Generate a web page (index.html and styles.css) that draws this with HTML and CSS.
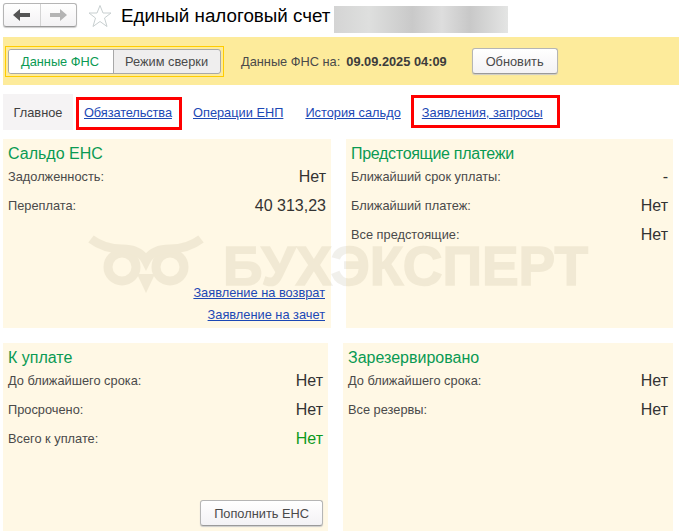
FILE: index.html
```html
<!DOCTYPE html>
<html lang="ru">
<head>
<meta charset="utf-8">
<title>Единый налоговый счет</title>
<link rel="stylesheet" href="styles.css">
</head>
<body>
<div class="page">
  <header class="head">
    <div class="nav">
      <span class="nav-btn"><svg width="20" height="14" viewBox="0 0 20 14"><path d="M1 7 8 1v4h10v4H8v4z" fill="#555"/></svg></span>
      <span class="nav-btn"><svg width="20" height="14" viewBox="0 0 20 14"><path d="M19 7 12 1v4H2v4h10v4z" fill="#b4b4b4"/></svg></span>
    </div>
    <svg class="star" width="24" height="24" viewBox="0 0 24 24"><path d="M12 1.500 15 9h8l-6.500 5 2.500 8.500-7-5-7 5L7.500 14 1 9h8z" fill="#fff" stroke="#c8cfd0" stroke-width="1"/></svg>
    <h1 class="title">Единый налоговый счет</h1>
    <div class="blurred"></div>
  </header>

  <section class="bar">
    <div class="switch-wrap">
      <div class="switch">
        <span class="switch-item active">Данные ФНС</span>
        <span class="switch-item">Режим сверки</span>
      </div>
    </div>
    <span class="bar-label">Данные ФНС на:</span>
    <b class="bar-date">09.09.2025 04:09</b>
    <span class="btn refresh">Обновить</span>
  </section>

  <nav class="tabs">
    <span class="tab current">Главное</span>
    <a class="tab boxed first" href="#">Обязательства</a>
    <a class="tab enp" href="#">Операции ЕНП</a>
    <a class="tab hist" href="#">История сальдо</a>
    <a class="tab boxed last" href="#">Заявления, запросы</a>
  </nav>

  <div class="row row-top">
    <section class="panel p-a">
      <h2>Сальдо ЕНС</h2>
      <div class="line"><span>Задолженность:</span><b>Нет</b></div>
      <div class="line"><span>Переплата:</span><b>40 313,23</b></div>
      <div class="links">
        <a href="#">Заявление на возврат</a>
        <a href="#">Заявление на зачет</a>
      </div>
    </section>
    <section class="panel p-b">
      <h2 class="tight">Предстоящие платежи</h2>
      <div class="line"><span>Ближайший срок уплаты:</span><b>-</b></div>
      <div class="line"><span>Ближайший платеж:</span><b>Нет</b></div>
      <div class="line"><span>Все предстоящие:</span><b>Нет</b></div>
    </section>
  </div>

  <div class="row row-bottom">
    <section class="panel p-c">
      <h2>К уплате</h2>
      <div class="line"><span>До ближайшего срока:</span><b>Нет</b></div>
      <div class="line"><span>Просрочено:</span><b>Нет</b></div>
      <div class="line"><span>Всего к уплате:</span><b class="ok">Нет</b></div>
      <div class="pay"><span class="btn">Пополнить ЕНС</span></div>
    </section>
    <section class="panel p-d">
      <h2>Зарезервировано</h2>
      <div class="line"><span>До ближайшего срока:</span><b>Нет</b></div>
      <div class="line"><span>Все резервы:</span><b>Нет</b></div>
    </section>
  </div>

  <div class="mark">
    <svg class="owl" width="130" height="62" viewBox="0 0 130 62"><g fill="none" stroke="#6e5a28" stroke-width="9"><circle cx="37" cy="35" r="14"/><circle cx="85" cy="35" r="14"/><path d="M6 7c8 6 18 10 31 10 12 0 20 4 24 12 4-8 12-12 24-12 13 0 23-4 31-10"/></g><path d="M52 42h18l-9 19z" fill="#6e5a28"/></svg>
    <span class="mark-text">БУХЭКСПЕРТ</span>
  </div>
</div>
</body>
</html>
```

FILE: styles.css
```css
* { box-sizing: border-box; }
html, body { margin: 0; padding: 0; background: #fff; }
body { font-family: "Liberation Sans", Arial, sans-serif; font-size: 12.800px; color: #4a4a4a; }
.page { position: relative; width: 679px; height: 531px; overflow: hidden; }
a { color: #1c48b5; }

.head { height: 37px; display: flex; align-items: flex-start; }
.nav { display: flex; width: 74px; height: 24px; margin: 3px 0 0 3px; border: 1px solid #b5b5b5; border-bottom-color: #9a9a9a; border-radius: 3px; background: linear-gradient(#fff, #f3f2f4); box-shadow: 0 1px 1px #ccc; }
.nav-btn { flex: 1; display: flex; align-items: center; justify-content: center; }
.nav-btn + .nav-btn { border-left: 1px solid #d4d4d4; }
.star { margin: 4px 0 0 11px; }
.title { margin: 4px 0 0 9px; font-size: 18.800px; font-weight: 400; line-height: 24px; color: #000; white-space: nowrap; }
.blurred { width: 174px; height: 27px; margin: 6px 0 0 4px; background: linear-gradient(90deg, #d4d4d4, #dedfde 20%, #c9c9c9 45%, #dddddd 62%, #c8c8c8 78%, #e4e5e4); }

.bar { height: 48px; margin-left: 3px; padding-left: 2px; display: flex; align-items: center; background: #fdeb9b; }
.switch-wrap { padding: 2px; border: 1px solid #fc0; height: 31px; width: 219px; }
.switch { display: flex; height: 25px; border: 1px solid #a8a8a8; border-radius: 3px; overflow: hidden; background: #efeeee; line-height: 23px; }
.switch-item { flex: 1; padding-left: 11px; color: #4a4a4a; white-space: nowrap; }
.switch-item.active { flex: none; width: 105px; padding-left: 12px; background: #fff; color: #0a9a53; border-right: 1px solid #a8a8a8; }
.bar-label { margin-left: 17px; }
.bar-date { margin: 1px 0 0 6px; font-size: 12.800px; color: #3c3c3c; }
.btn { display: inline-block; height: 26px; padding: 0 13px; line-height: 25px; border: 1px solid #b5b5b5; border-bottom-color: #9a9a9a; border-radius: 3px; background: linear-gradient(#fff, #f3f2f5); box-shadow: 0 1px 1px #ccc; color: #4a4a4a; white-space: nowrap; }
.refresh { margin-left: 25px; }

.tabs { height: 54px; padding: 9px 0 0 3px; display: flex; align-items: flex-start; }
.tab { height: 36px; line-height: 37px; white-space: nowrap; }
.current { width: 70px; background: #f5f3f4; text-align: center; color: #3f3f3f; }
.boxed { border: 3px solid #f00; height: 33px; }
.first { margin: 3px 0 0 3px; padding-left: 5px; line-height: 26px; width: 106px; letter-spacing: -.1px; }
.enp { margin-left: 11px; }
.hist { margin-left: 22px; }
.last { margin: 1px 0 0 10px; padding-left: 8px; width: 149px; line-height: 29px; }

.row { display: flex; gap: 15px; padding-left: 3px; }
.row-top { height: 189px; margin-bottom: 15px; }
.row-bottom { height: 188px; }
.panel { background: #fff8e5; padding: 5px 5px 0; display: flex; flex-direction: column; }
.p-a { width: 328px; }
.p-b { width: 327px; }
.p-c { width: 325px; }
.p-d { width: 330px; }
h2 { margin: 0 0 2px; font-size: 16px; font-weight: 400; line-height: 20px; color: #0a9a53; }
.tight { letter-spacing: -.3px; }
.line { display: flex; justify-content: space-between; align-items: center; height: 29px; }
.line span { margin-top: -9px; }
.line b { margin-top: -7px; font-size: 16px; font-weight: 400; color: #333; }
.line b.ok { color: #0d9a1c; }
.links { margin-top: auto; display: flex; flex-direction: column; align-items: flex-end; gap: 7px; padding: 0 1px 6px 0; }
.links a { line-height: 15px; }
.pay { margin-top: auto; padding-bottom: 5px; display: flex; justify-content: flex-end; }

.mark { position: absolute; left: 85px; top: 232px; display: flex; align-items: center; opacity: .085; pointer-events: none; }
.owl { display: block; }
.mark-text { margin: 5px 0 0 8px; font-size: 55px; line-height: 44px; font-weight: 700; color: #6e5a28; -webkit-text-stroke: 1.500px #6e5a28; }
```
